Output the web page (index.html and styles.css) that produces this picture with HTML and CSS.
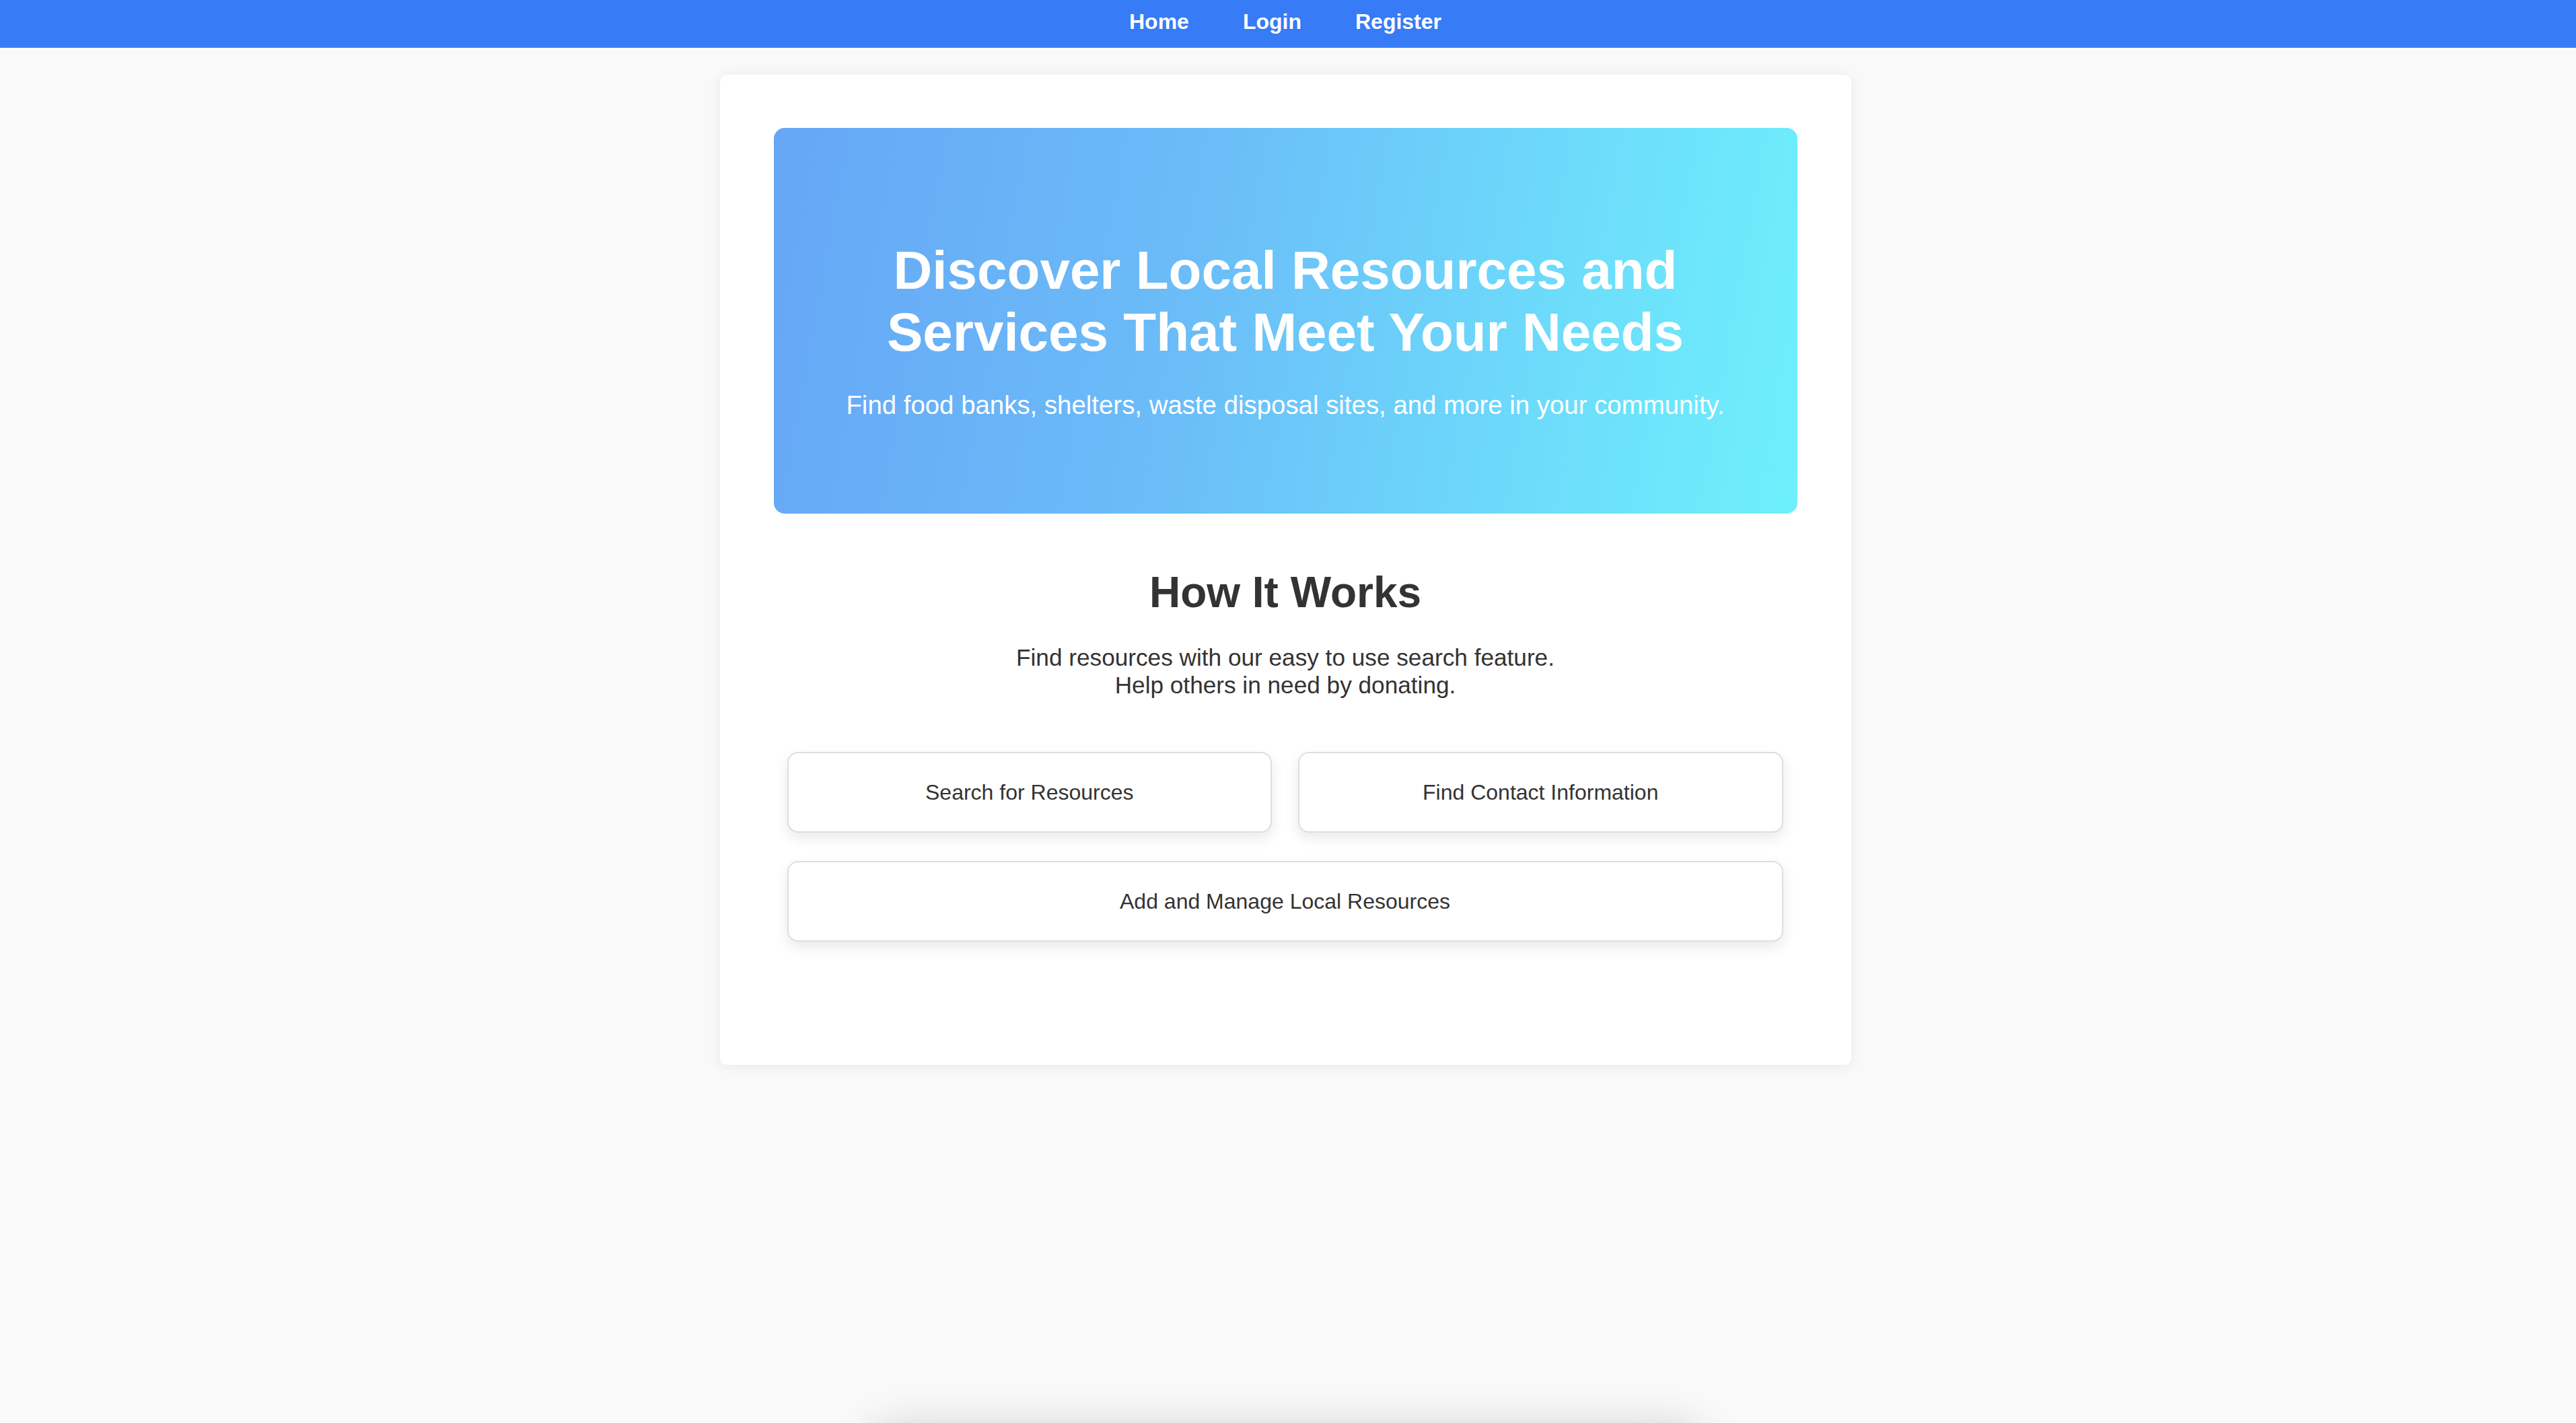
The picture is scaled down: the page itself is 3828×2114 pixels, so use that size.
FILE: index.html
```html
<!DOCTYPE html>
<html lang="en">
<head>
<meta charset="utf-8">
<title>Local Resources</title>
<link rel="stylesheet" href="styles.css">
</head>
<body>
<nav class="topnav">
  <div class="topnav-links">
    <a class="topnav-link" href="#">Home</a>
    <a class="topnav-link" href="#">Login</a>
    <a class="topnav-link" href="#">Register</a>
  </div>
</nav>
<div class="shell">
  <main class="panel">
    <section class="hero">
      <h1 class="hero-title">Discover Local Resources and<br>Services That Meet Your Needs</h1>
      <p class="hero-sub">Find food banks, shelters, waste disposal sites, and more in your community.</p>
    </section>
    <section class="how">
      <h2 class="how-title">How It Works</h2>
      <p class="how-text">Find resources with our easy to use search feature.<br>Help others in need by donating.</p>
      <div class="features">
        <div class="feature">Search for Resources</div>
        <div class="feature">Find Contact Information</div>
        <div class="feature feature-wide">Add and Manage Local Resources</div>
      </div>
    </section>
  </main>
  <footer class="footer"></footer>
</div>
</body>
</html>
```
FILE: styles.css
```css
* { box-sizing: border-box; }

html, body {
  margin: 0;
  padding: 0;
  background: #f9f9f9;
  font-family: "Liberation Sans", Arial, Helvetica, sans-serif;
  color: #333;
}

.topnav {
  background: #377bf6;
  height: 71px;
  padding-top: 14px;
}

.topnav-links {
  display: flex;
  justify-content: center;
  gap: 80px;
  padding-right: 8px;
}

.topnav-link {
  color: #fff;
  font-weight: bold;
  font-size: 32px;
  line-height: 37px;
  text-decoration: none;
}

.shell {
  padding-right: 8px;
  padding-bottom: 200px;
}

.panel {
  width: 1681px;
  margin: 40px auto 0;
  background: #fff;
  border-radius: 10px;
  box-shadow: 0 2px 20px rgba(0, 0, 0, 0.07);
  padding: 79px 80px 183px;
}

.hero {
  border-radius: 16px;
  background: linear-gradient(100deg, #66a6f6 0%, #6bbcf8 40%, #6de0fb 80%, #6ef0fc 100%);
  color: #fff;
  text-align: center;
  padding: 166px 40px 139px;
}

.hero-title {
  margin: 0 0 40px;
  font-size: 80px;
  font-weight: bold;
  line-height: 92px;
}

.hero-sub {
  margin: 0;
  font-size: 38.4px;
  line-height: 44px;
}

.how {
  text-align: center;
}

.how-title {
  margin: 80px 0 0;
  font-size: 64px;
  font-weight: bold;
  line-height: 74px;
  color: #333;
}

.how-text {
  margin: 39px 0 0;
  font-size: 35.2px;
  line-height: 41px;
  color: #333;
}

.features {
  display: grid;
  grid-template-columns: 1fr 1fr;
  column-gap: 39px;
  row-gap: 42px;
  margin-top: 79px;
  padding: 0 21px 0 20px;
}

.feature {
  background: #fff;
  border: 2px solid #dedede;
  border-radius: 16px;
  box-shadow: 0 8px 20px rgba(0, 0, 0, 0.09);
  padding: 39px 20px;
  font-size: 32px;
  line-height: 38px;
  color: #333;
  text-align: center;
}

.feature-wide {
  grid-column: 1 / 3;
}

.footer {
  width: 1240px;
  height: 120px;
  margin: 536px auto 0;
  background: #f9f9f9;
  border-radius: 40px;
  box-shadow: 0 0 60px rgba(0, 0, 0, 0.16);
}
```
